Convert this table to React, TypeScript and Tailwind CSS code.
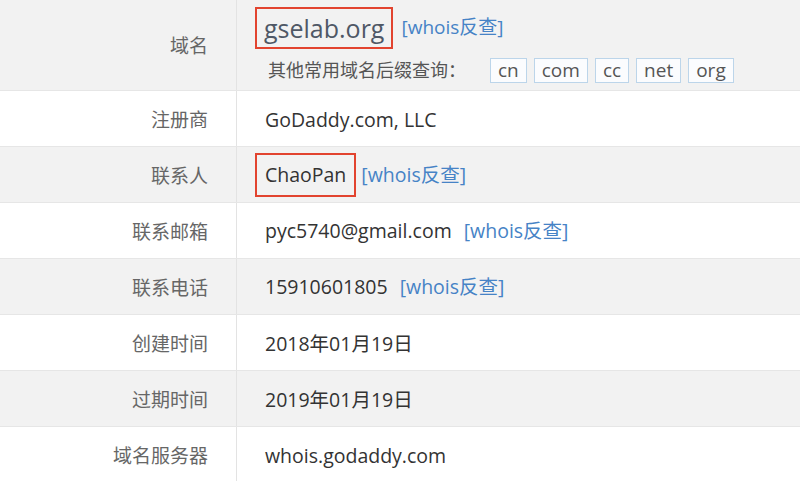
import React from "react";

const font = { fontFamily: '"Open Sans", "Noto Sans CJK SC", sans-serif' };

function Link() {
    return <span className="text-[#4683c6]">[whois反查]</span>;
}

function Row({ label, gray, children, tall }: { label: string; gray?: boolean; children: React.ReactNode; tall?: boolean }) {
    return (
        <div className={`flex border-b border-[#e6e6e6] ${gray ? "bg-[#f2f2f2]" : "bg-white"} ${tall ? "h-[91px]" : "h-[56px]"}`}>
            <div className="flex w-[237px] shrink-0 items-center justify-end border-r border-[#e3e3e3] pt-[3px] pr-[28px] text-[19px] text-[#666]">
                {label}
            </div>
            <div className="flex flex-1 items-center pl-[28px] text-[19.5px] text-[#333]">{children}</div>
        </div>
    );
}

export default function App() {
    const tags = ["cn", "com", "cc", "net", "org"];
    return (
        <div className="h-[481px] w-[800px] overflow-hidden bg-white" style={font}>
            <Row label="域名" gray tall>
                <div className="-ml-[10px] flex flex-col">
                    <div className="flex items-center gap-[8px]">
                        <span className="border-2 border-[#e2442f] px-[7px] text-[25px] leading-[38px] text-[#4f5866]">gselab.org</span>
                        <span className="text-[19px]">
                            <Link />
                        </span>
                    </div>
                    <div className="mt-[8px] flex items-center pl-[13px]">
                        <span className="text-[18px] text-[#555]">其他常用域名后缀查询：</span>
                        <div className="ml-[24px] flex gap-[7px]">
                            {tags.map((t) => (
                                <span key={t} className="border border-[#bcd5ea] bg-[#fbfcfe] px-[7px] text-[19px] leading-[23px] text-[#555]">
                                    {t}
                                </span>
                            ))}
                        </div>
                    </div>
                </div>
            </Row>
            <Row label="注册商">
                <span className="pt-[3px]">GoDaddy.com, LLC</span>
            </Row>
            <Row label="联系人" gray>
                <div className="-ml-[10px] flex items-center gap-[5px] pt-[1px]">
                    <span className="border-2 border-[#e2442f] px-[8px] leading-[40px]">ChaoPan</span>
                    <Link />
                </div>
            </Row>
            <Row label="联系邮箱">
                <span>pyc5740@gmail.com</span>
                <span className="ml-[12px]">
                    <Link />
                </span>
            </Row>
            <Row label="联系电话" gray>
                <span>15910601805</span>
                <span className="ml-[12px]">
                    <Link />
                </span>
            </Row>
            <Row label="创建时间">
                <span className="pt-[3px]">2018年01月19日</span>
            </Row>
            <Row label="过期时间" gray>
                <span className="pt-[3px]">2019年01月19日</span>
            </Row>
            <Row label="域名服务器">
                <span className="pt-[3px]">whois.godaddy.com</span>
            </Row>
        </div>
    );
}
